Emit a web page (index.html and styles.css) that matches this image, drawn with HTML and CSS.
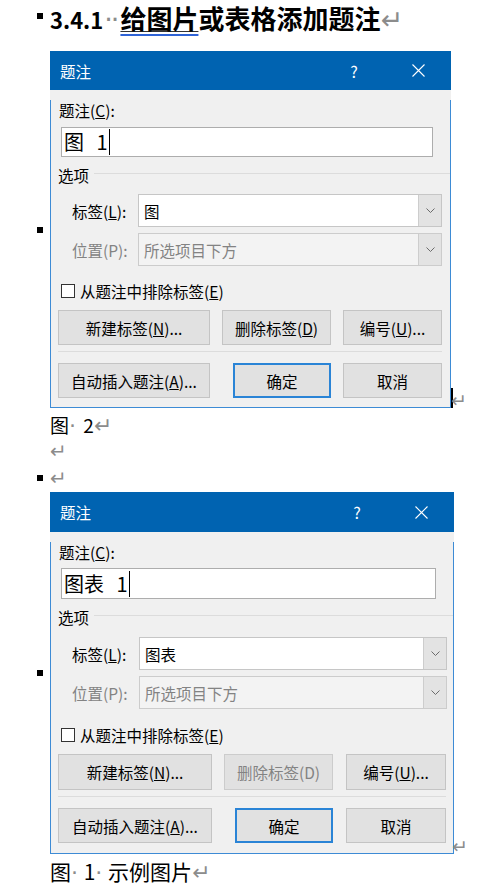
FILE: index.html
```html
<!DOCTYPE html>
<html lang="zh-CN">
<head>
  <meta charset="UTF-8">
  <title>3.4.1 给图片或表格添加题注</title>
  <link rel="stylesheet" href="styles.css">
</head>
<body>
  <div class="page">
    <!-- Heading -->
    <h3 class="heading"><span class="bullet"></span><span class="num">3.4.1</span><span class="mark dots">··</span><span class="squiggle"><span class="uline">给图片</span></span>或表格添加题注<span class="mark">↵</span></h3>

    <!-- First dialog: label 图 -->
    <div class="fig-line">
      <span class="bullet"></span>
      <div class="dialog">
        <div class="dlg-title">
          <span>题注</span>
          <span class="help">?</span>
          <span class="close"><svg width="13" height="13" viewBox="0 0 13 13"><path d="M0.5 0.5L12.5 12.5M12.5 0.5L0.5 12.5" stroke="#fff" stroke-width="1.1"/></svg></span>
        </div>
        <div class="dlg-body">
          <div class="dlg-label">题注(<u>C</u>):</div>
          <div class="text-input"><span>图 1</span><span class="cursor"></span></div>
          <div class="group-head">选项</div>
          <div class="field">
            <label>标签(<u>L</u>):</label>
            <div class="combo">
              <span class="combo-value">图</span>
              <span class="combo-arrow"><svg width="9" height="5" viewBox="0 0 9 5"><path d="M0.5 0.5L4.5 4.5L8.5 0.5" fill="none" stroke="#6b6b6b"/></svg></span>
            </div>
          </div>
          <div class="field disabled">
            <label>位置(P):</label>
            <div class="combo">
              <span class="combo-value">所选项目下方</span>
              <span class="combo-arrow"><svg width="9" height="5" viewBox="0 0 9 5"><path d="M0.5 0.5L4.5 4.5L8.5 0.5" fill="none" stroke="#6b6b6b"/></svg></span>
            </div>
          </div>
          <div class="check-row"><span class="checkbox"></span>从题注中排除标签(<u>E</u>)</div>
          <div class="btn-row">
            <button class="btn w-new">新建标签(<u>N</u>)...</button>
            <button class="btn w-del">删除标签(<u>D</u>)</button>
            <button class="btn w-num">编号(<u>U</u>)...</button>
          </div>
          <div class="dlg-sep"></div>
          <div class="btn-row row-last">
            <button class="btn w-new">自动插入题注(<u>A</u>)...</button>
            <button class="btn w-ok default">确定</button>
            <button class="btn w-num">取消</button>
          </div>
        </div>
      </div>
      <span class="caret"></span>
      <span class="mark fig-mark">↵</span>
    </div>
    <p class="caption">图<span class="mark">·</span> 2<span class="mark">↵</span></p>
    <p class="empty"><span class="mark">↵</span></p>
    <p class="empty bulleted"><span class="bullet"></span><span class="mark">↵</span></p>

    <!-- Second dialog: label 图表 -->
    <div class="fig-line second">
      <span class="bullet"></span>
      <div class="dialog alt">
        <div class="dlg-title">
          <span>题注</span>
          <span class="help">?</span>
          <span class="close"><svg width="13" height="13" viewBox="0 0 13 13"><path d="M0.5 0.5L12.5 12.5M12.5 0.5L0.5 12.5" stroke="#fff" stroke-width="1.1"/></svg></span>
        </div>
        <div class="dlg-body">
          <div class="dlg-label">题注(<u>C</u>):</div>
          <div class="text-input"><span>图表 1</span><span class="cursor"></span></div>
          <div class="group-head">选项</div>
          <div class="field">
            <label>标签(<u>L</u>):</label>
            <div class="combo">
              <span class="combo-value">图表</span>
              <span class="combo-arrow"><svg width="9" height="5" viewBox="0 0 9 5"><path d="M0.5 0.5L4.5 4.5L8.5 0.5" fill="none" stroke="#6b6b6b"/></svg></span>
            </div>
          </div>
          <div class="field disabled">
            <label>位置(P):</label>
            <div class="combo">
              <span class="combo-value">所选项目下方</span>
              <span class="combo-arrow"><svg width="9" height="5" viewBox="0 0 9 5"><path d="M0.5 0.5L4.5 4.5L8.5 0.5" fill="none" stroke="#6b6b6b"/></svg></span>
            </div>
          </div>
          <div class="check-row"><span class="checkbox"></span>从题注中排除标签(<u>E</u>)</div>
          <div class="btn-row">
            <button class="btn w-new">新建标签(<u>N</u>)...</button>
            <button class="btn w-del" disabled>删除标签(D)</button>
            <button class="btn w-num">编号(<u>U</u>)...</button>
          </div>
          <div class="dlg-sep"></div>
          <div class="btn-row row-last">
            <button class="btn w-new">自动插入题注(<u>A</u>)...</button>
            <button class="btn w-ok default">确定</button>
            <button class="btn w-num">取消</button>
          </div>
        </div>
      </div>
      <span class="mark fig-mark">↵</span>
    </div>
    <p class="caption caption-lg">图<span class="mark">·</span> 1<span class="mark">·</span> 示例图片<span class="mark">↵</span></p>
  </div>
</body>
</html>
```

FILE: styles.css
```css
/* Word-like page with two caption dialogs */
body {
  margin: 0;
  font-family: "Noto Sans CJK SC", sans-serif;
  color: #000;
  background: #fff;
}

.page {
  padding-left: 37px;
}

.bullet {
  display: inline-block;
  flex: none;
  width: 6px;
  height: 6px;
  margin-right: 7px;
  background: #000;
}

/* formatting marks (spaces, paragraph ends) */
.mark {
  color: #8c8c8c;
  font-family: "DejaVu Sans", sans-serif;
  font-weight: normal;
}

.heading {
  margin: 0;
  height: 36px;
  line-height: 36px;
  font-size: 26px;
  font-weight: 700;
  white-space: nowrap;
}

.heading .bullet {
  vertical-align: 10px;
}

.heading .num {
  font-size: 22px;
}

.heading .dots {
  font-size: 10px;
  letter-spacing: -2px;
  margin: 0 3px 0 1px;
}

.heading .mark {
  font-size: 27px;
}

.squiggle {
  text-decoration: underline 2px #2f63d6;
  text-underline-offset: 5px;
}

.uline {
  text-decoration: underline 1px #333;
  text-underline-offset: 2px;
}

.fig-line {
  display: flex;
  align-items: flex-end;
  margin-top: 15px;
}

.fig-line.second {
  margin-top: 1px;
}

.fig-line .bullet {
  align-self: center;
}

.caret {
  width: 2px;
  height: 20px;
  background: #000;
  flex: none;
}

.fig-mark {
  font-size: 19px;
  line-height: 16px;
  margin-left: -2px;
}

.caption {
  margin: 4px 0 0;
  padding-left: 13px;
  font-size: 19px;
  line-height: 26px;
  word-spacing: 3px;
}

.caption-lg {
  font-size: 21px;
  word-spacing: 1px;
}

.caption .mark {
  font-size: 22px;
  line-height: 20px;
}

.empty {
  margin: 0;
  height: 26px;
  padding-left: 13px;
  display: flex;
  align-items: center;
}

.empty.bulleted {
  height: 27px;
  padding-left: 0;
}

.empty .mark {
  font-size: 20px;
  line-height: 20px;
}

/* Dialog */
.dialog {
  flex: none;
  width: 401px;
  background: #f0f0f0;
  font-size: 15.5px;
  line-height: 20px;
}

.dlg-title {
  height: 39px;
  display: flex;
  align-items: center;
  padding: 0 14px 0 10px;
  background: #0063b1;
  color: #fff;
}

.dlg-title .help {
  margin-left: auto;
  width: 30px;
  text-align: center;
  font-size: 16px;
}

.dlg-title .close {
  width: 38px;
  margin-left: 30px;
  display: flex;
  justify-content: center;
}

.dlg-body {
  border: 1px solid #3d8bd5;
  border-top: none;
  padding-bottom: 9px;
}

.dlg-label {
  margin: 10px 0 0 8px;
}

.text-input {
  box-sizing: border-box;
  width: 372px;
  height: 30px;
  margin: 7px 0 0 10px;
  padding-left: 2px;
  display: flex;
  align-items: center;
  background: #fff;
  border: 1px solid #adadad;
  font-size: 20px;
  word-spacing: 8px;
}

.cursor {
  width: 1px;
  height: 26px;
  margin-left: 1px;
  background: #000;
}

.group-head {
  display: flex;
  align-items: flex-start;
  margin: 8px 0 0 7px;
}

.group-head::after {
  content: "";
  flex: 1;
  height: 1px;
  margin: 8px 0 0 5px;
  background: #dcdcdc;
}

.field {
  display: flex;
  align-items: center;
  margin: 9px 8px 0 21px;
}

.field + .field {
  margin-top: 6px;
}

.field label {
  flex: none;
  width: 66px;
}

.combo {
  flex: 1;
  box-sizing: border-box;
  height: 33px;
  display: flex;
  background: #fff;
  border: 1px solid #c6c6c6;
}

.combo-value {
  flex: 1;
  align-self: center;
  padding-left: 5px;
}

.combo-arrow {
  width: 22px;
  display: flex;
  align-items: center;
  justify-content: center;
  background: #e3e3e3;
  border-left: 1px solid #cdcdcd;
}

.field.disabled {
  color: #838383;
}

.field.disabled .combo {
  background: #f3f3f3;
  border-color: #cccccc;
}

.check-row {
  display: flex;
  align-items: center;
  margin: 15px 0 0 10px;
}

.checkbox {
  box-sizing: border-box;
  width: 14px;
  height: 14px;
  margin-right: 5px;
  background: #fff;
  border: 1px solid #333;
}

.btn-row {
  display: flex;
  margin: 9px 0 0 7px;
}

.btn-row.row-last {
  margin-top: 11px;
}

.btn {
  box-sizing: border-box;
  height: 35px;
  margin: 0 0 0 12px;
  padding: 0;
  font: inherit;
  color: #000;
  background: #e1e1e1;
  border: 1px solid #c4c4c4;
}

.btn:first-child {
  margin-left: 0;
}

.btn:disabled {
  color: #838383;
  border-color: #cccccc;
}

.btn.default {
  border: 2px solid #2a84d6;
}

.w-new { width: 152px; }
.w-del { width: 109px; }
.w-num { width: 99px; }
.w-ok { width: 98px; margin-left: 23px; }

.dlg-sep {
  height: 1px;
  margin: 6px 8px 0 7px;
  background: #dcdcdc;
}

/* the second screenshot is a few pixels larger */
.dialog.alt {
  width: 404px;
}

.alt .dlg-title {
  height: 40px;
}

.alt .dlg-body {
  padding-bottom: 10px;
}

.alt .text-input {
  width: 375px;
  height: 31px;
  margin-top: 6px;
}

.alt .field {
  margin: 10px 6px 0 21px;
}

.alt .field + .field {
  margin-top: 6px;
}

.alt .field label {
  width: 67px;
}

.alt .check-row {
  margin-top: 16px;
}

.alt .btn-row .btn {
  height: 36px;
}

.alt .btn-row.row-last .btn {
  height: 35px;
}

.alt .w-new { width: 154px; }
.alt .w-num { width: 100px; margin-left: 13px; }

.alt .dlg-sep {
  margin-right: 7px;
}
```
